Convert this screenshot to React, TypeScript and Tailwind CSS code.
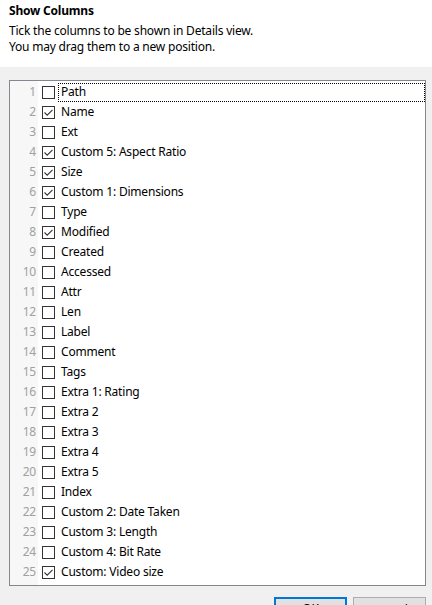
import { useState } from 'react';

const initialColumns: { label: string; checked: boolean }[] = [
    { label: 'Path', checked: false },
    { label: 'Name', checked: true },
    { label: 'Ext', checked: false },
    { label: 'Custom 5: Aspect Ratio', checked: true },
    { label: 'Size', checked: true },
    { label: 'Custom 1: Dimensions', checked: true },
    { label: 'Type', checked: false },
    { label: 'Modified', checked: true },
    { label: 'Created', checked: false },
    { label: 'Accessed', checked: false },
    { label: 'Attr', checked: false },
    { label: 'Len', checked: false },
    { label: 'Label', checked: false },
    { label: 'Comment', checked: false },
    { label: 'Tags', checked: false },
    { label: 'Extra 1: Rating', checked: false },
    { label: 'Extra 2', checked: false },
    { label: 'Extra 3', checked: false },
    { label: 'Extra 4', checked: false },
    { label: 'Extra 5', checked: false },
    { label: 'Index', checked: false },
    { label: 'Custom 2: Date Taken', checked: false },
    { label: 'Custom 3: Length', checked: false },
    { label: 'Custom 4: Bit Rate', checked: false },
    { label: 'Custom: Video size', checked: true },
];

function CheckBox({ checked }: { checked: boolean }) {
    return (
        <span className="flex h-[13px] w-[13px] shrink-0 items-center justify-center border border-[#333333] bg-white">
            {checked && (
                <svg width="11" height="11" viewBox="0 0 11 11" fill="none">
                    <path d="M1.5 5.5 L4.2 8.2 L9.5 2.8" stroke="#333333" strokeWidth="1.1" />
                </svg>
            )}
        </span>
    );
}

export default function App() {
    const [columns, setColumns] = useState(initialColumns);
    const [focused, setFocused] = useState(0);

    const toggle = (i: number) => {
        setFocused(i);
        setColumns(prev => prev.map((c, j) => (j === i ? { ...c, checked: !c.checked } : c)));
    };

    return (
        <div
            className="flex h-[605px] w-[432px] flex-col overflow-hidden bg-[#f0f0f0] text-[12px] tracking-[-0.2px] text-black"
            style={{ fontFamily: '"Noto Sans", "Open Sans", sans-serif' }}
        >
            {/* header */}
            <div className="h-[67px] shrink-0 bg-white px-[9px] pt-[3px] leading-[16px]">
                <div className="font-bold">Show Columns</div>
                <div className="mt-[4px]">Tick the columns to be shown in Details view.</div>
                <div>You may drag them to a new position.</div>
            </div>

            {/* list, with a light gutter for the row numbers */}
            <div className="ml-[9px] mt-[13px] flex h-[506px] w-[417px] shrink-0 flex-col border border-[#828790] bg-[linear-gradient(to_right,#f7f7f7_28px,#ffffff_28px)] pt-[1px]">
                {columns.map((col, i) => (
                    <div key={col.label} className="flex h-[20px] items-center" onClick={() => toggle(i)}>
                        <span className="w-[27px] shrink-0 pr-[1px] text-right text-[#a0a0a0]">{i + 1}</span>
                        <span className="ml-[5px]">
                            <CheckBox checked={col.checked} />
                        </span>
                        <span
                            className={
                                'ml-[3px] flex h-[19px] flex-1 items-center pl-[2px] ' +
                                (focused === i ? 'border border-dotted border-black' : 'border border-transparent')
                            }
                        >
                            {col.label}
                        </span>
                    </div>
                ))}
            </div>

            {/* buttons */}
            <div className="mt-[11px] flex justify-end gap-[6px] pr-[6px]">
                <button className="h-[23px] w-[73px] border-2 border-[#0078d7] bg-[#e1e1e1] pt-[1px] leading-[16px]">OK</button>
                <button className="h-[23px] w-[73px] border border-[#adadad] bg-[#e1e1e1] pt-[2px] leading-[16px]">Cancel</button>
            </div>
        </div>
    );
}
